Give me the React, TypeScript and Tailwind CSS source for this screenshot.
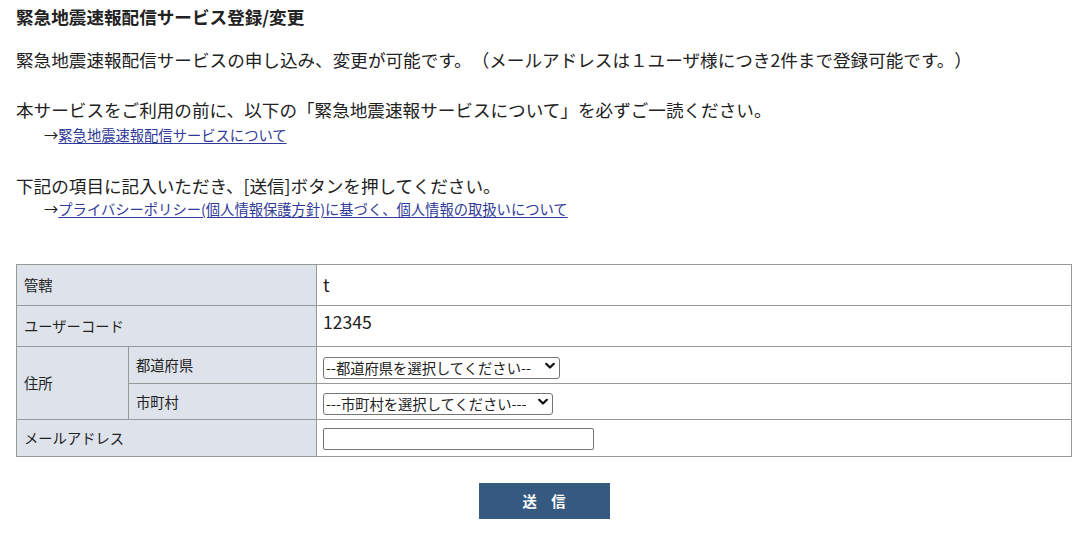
import React from "react";

const font = { fontFamily: '"Noto Sans CJK JP", "Noto Sans", sans-serif' };

function Chevron() {
  return (
    <svg
      className="pointer-events-none absolute right-[5px] top-1/2 -translate-y-1/2"
      width="10"
      height="7"
      viewBox="0 0 10 7"
    >
      <path d="M1.2 1.2 L5 5 L8.8 1.2" fill="none" stroke="#111" strokeWidth="2.2" strokeLinecap="round" strokeLinejoin="round" />
    </svg>
  );
}

function FakeSelect({ width, label }: { width: string; label: string }) {
  return (
    <div className={`relative inline-block h-[22px] ${width}`}>
      <select
        className="h-[22px] w-full appearance-none rounded-[3px] border border-[#767676] bg-white pl-[2px] pr-[18px] text-[14.3px] leading-[20px] text-[#222] [text-spacing-trim:space-all]"
        style={font}
        defaultValue=""
      >
        <option value="">{label}</option>
      </select>
      <Chevron />
    </div>
  );
}

export default function App() {
  const label = "bg-[#dee2eb] border border-[#999] pl-[7px] text-[14.3px] text-[#222] align-middle";
  const value = "bg-white border border-[#999] pl-[6px] text-[#222] align-middle";
  return (
    <div className="min-h-[537px] bg-white pl-[16px] text-[#222] [text-spacing-trim:space-all]" style={font}>
      <div className="w-[1056px]">
        <h1 className="pt-[7px] text-[17.6px] font-bold leading-[20px]">
          緊急地震速報配信サービス登録/変更
        </h1>
        <p className="mt-[21px] text-[17.6px] leading-[24px]">
          緊急地震速報配信サービスの申し込み、変更が可能です。（メールアドレスは１ユーザ様につき2件まで登録可能です。）
        </p>
        <p className="mt-[26px] text-[17.6px] leading-[24px]">
          本サービスをご利用の前に、以下の「緊急地震速報サービスについて」を必ずご一読ください。
        </p>
        <p className="mt-[3px] pl-[28px] text-[14.3px] leading-[20px]">
          →<a href="#" className="text-[#2f3a99] underline underline-offset-2">緊急地震速報配信サービスについて</a>
        </p>
        <p className="mt-[29px] text-[17.6px] leading-[24px]">
          下記の項目に記入いただき、[送信]ボタンを押してください。
        </p>
        <p className="mt-[1px] pl-[28px] text-[14.3px] leading-[20px]">
          →<a href="#" className="text-[#2f3a99] underline underline-offset-2">プライバシーポリシー(個人情報保護方針)に基づく、個人情報の取扱いについて</a>
        </p>

        <table className="mt-[45px] w-[1056px] border-collapse border border-[#999]">
          <colgroup>
            <col className="w-[112px]" />
            <col className="w-[188px]" />
            <col />
          </colgroup>
          <tbody>
            <tr className="h-[41px]">
              <td colSpan={2} className={label}>管轄</td>
              <td className={`${value} text-[17.6px]`}>t</td>
            </tr>
            <tr className="h-[41px]">
              <td colSpan={2} className={label}>ユーザーコード</td>
              <td className="border border-[#999] bg-white pl-[6px] pt-[4px] align-top text-[17.6px] leading-[24px]">12345</td>
            </tr>
            <tr className="h-[37px]">
              <td rowSpan={2} className={label}>住所</td>
              <td className={label}>都道府県</td>
              <td className={value}>
                <div className="flex pt-[1px]">
                  <FakeSelect width="w-[237px]" label="--都道府県を選択してください--" />
                </div>
              </td>
            </tr>
            <tr className="h-[36px]">
              <td className={label}>市町村</td>
              <td className={value}>
                <div className="flex pt-[1px]">
                  <FakeSelect width="w-[230px]" label="---市町村を選択してください---" />
                </div>
              </td>
            </tr>
            <tr className="h-[37px]">
              <td colSpan={2} className={label}>メールアドレス</td>
              <td className={value}>
                <div className="flex pt-[1px]">
                  <input
                    type="text"
                    className="h-[22px] w-[271px] rounded-[2px] border border-[#767676] bg-white px-[2px] text-[14px]"
                  />
                </div>
              </td>
            </tr>
          </tbody>
        </table>

        <div className="mt-[26px] flex justify-center">
          <button
            type="button"
            className="h-[36px] w-[131px] bg-[#365a7f] text-[14.3px] font-bold text-white"
            style={font}
          >
            送　信
          </button>
        </div>
      </div>
    </div>
  );
}
